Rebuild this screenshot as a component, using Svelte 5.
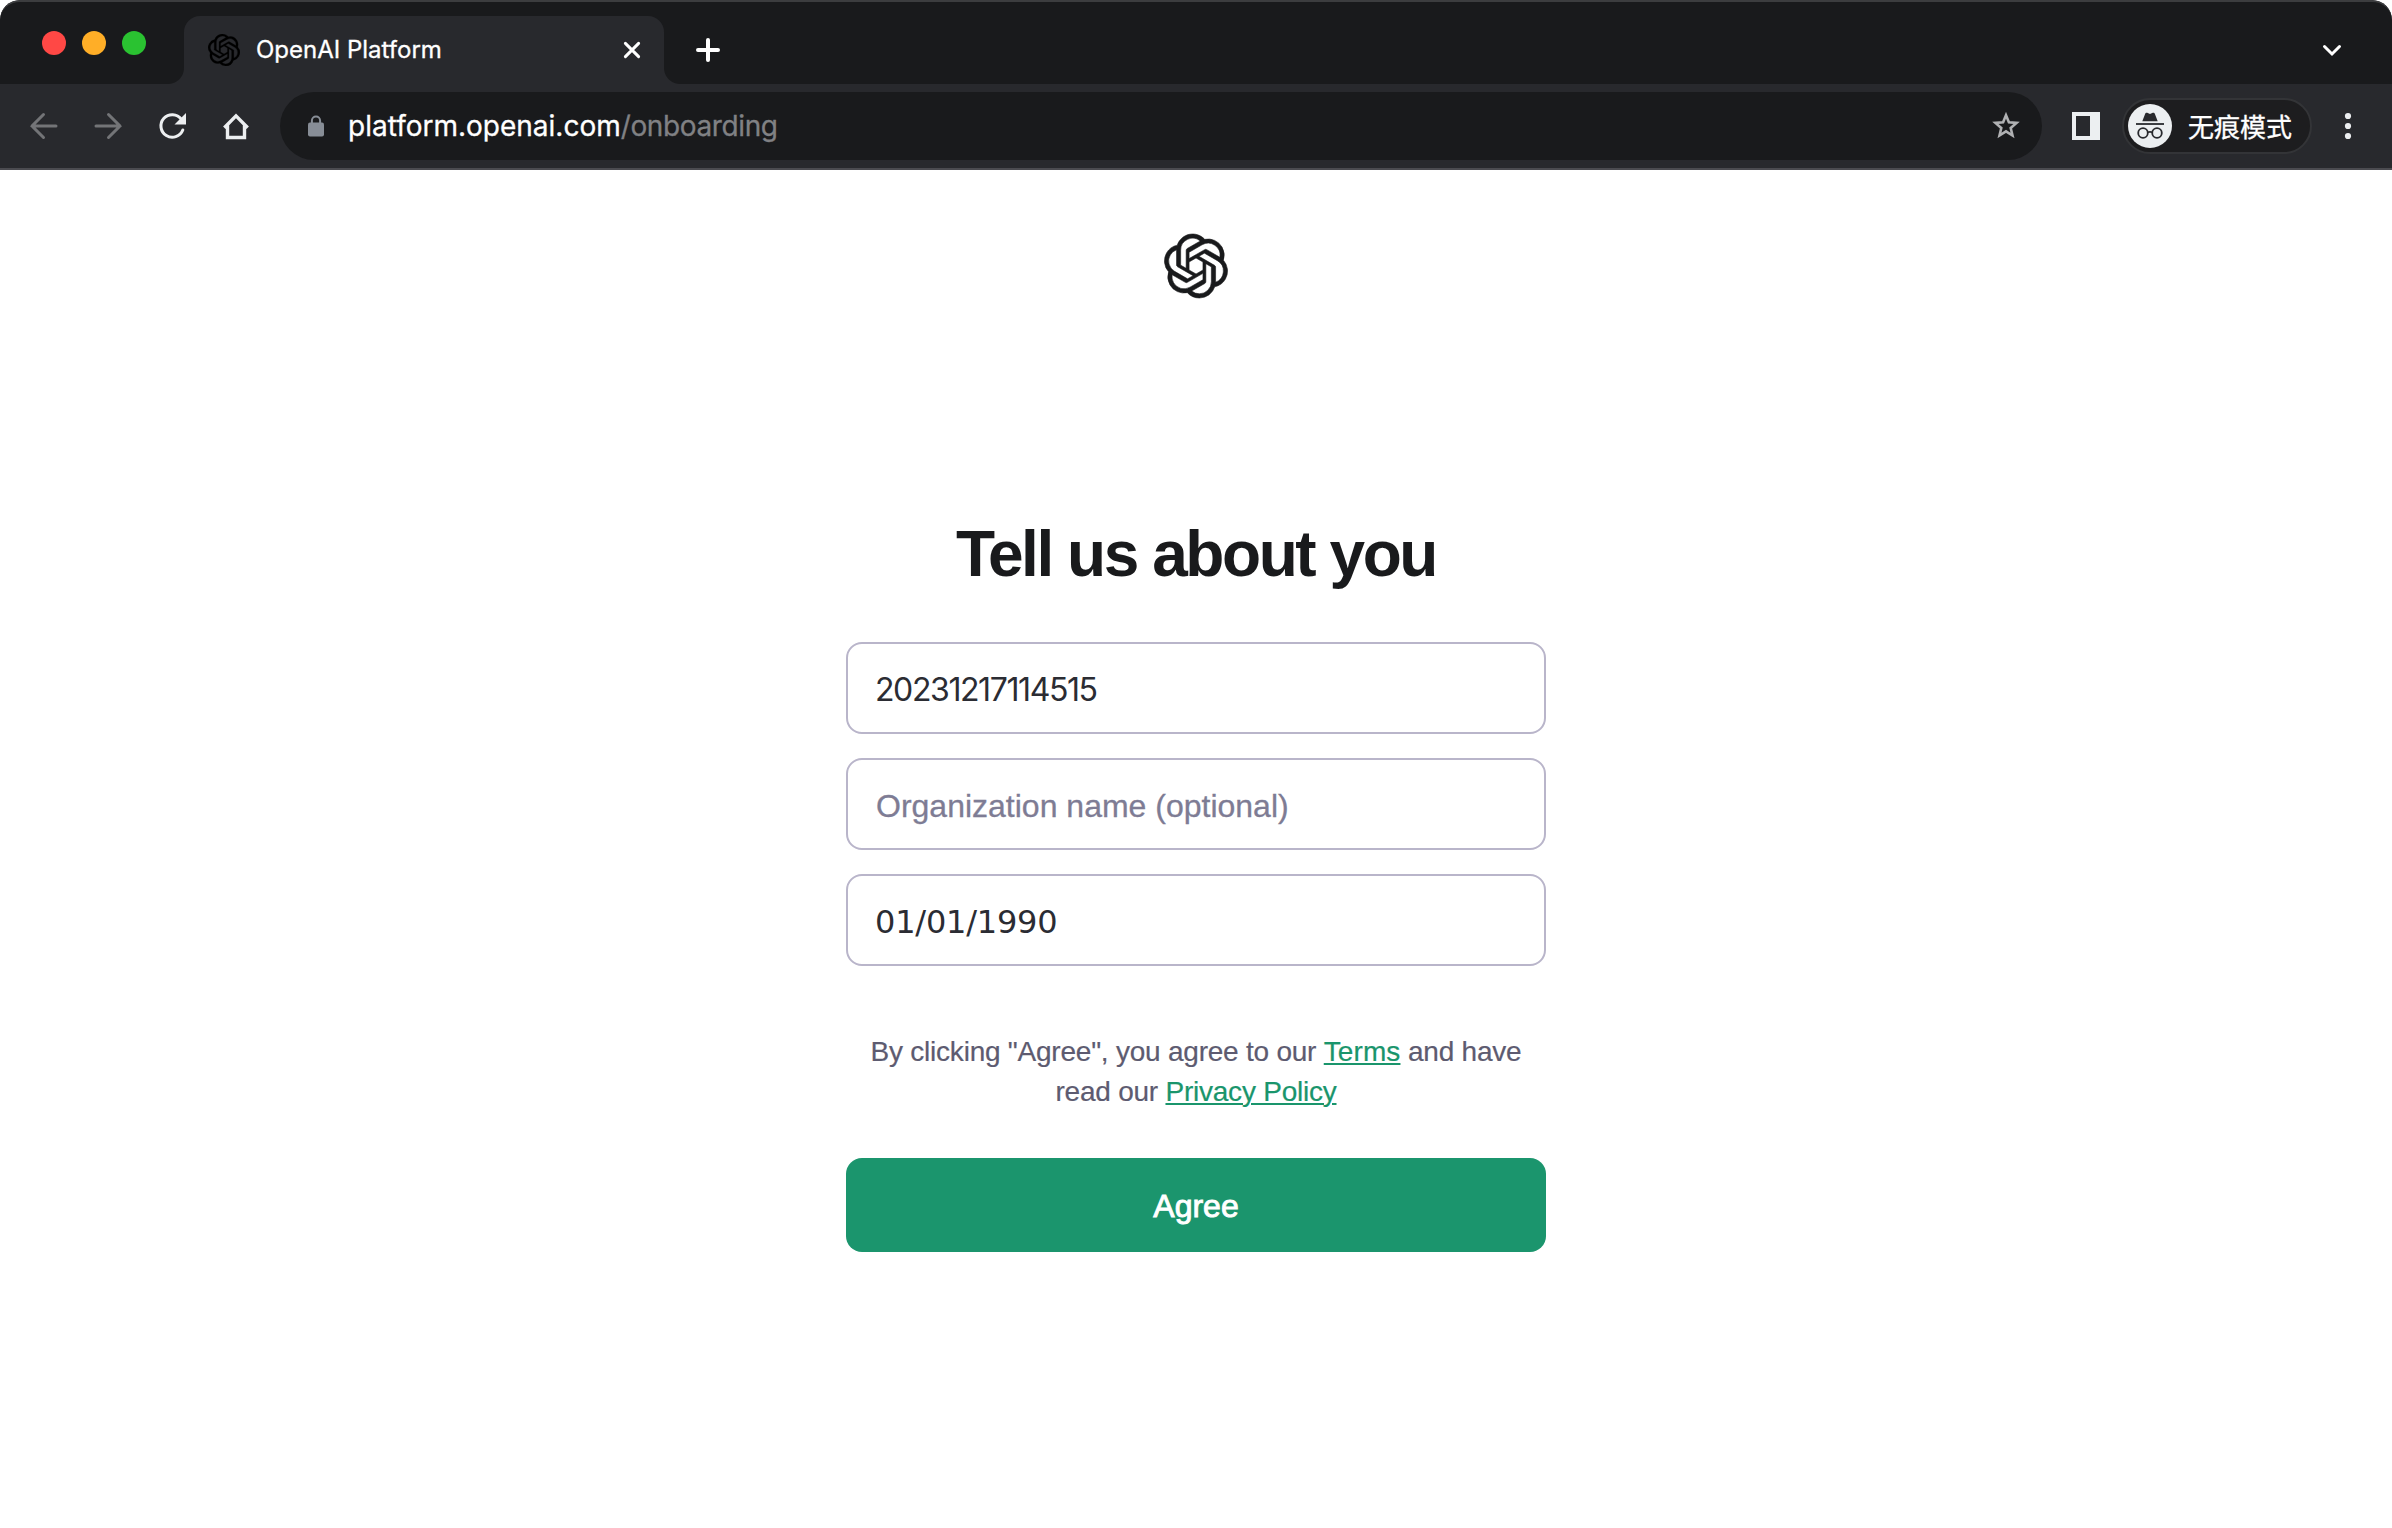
<script>
  const knot =
    'M22.2819 9.8211a5.9847 5.9847 0 0 0-.5157-4.9108 6.0462 6.0462 0 0 0-6.5098-2.9A6.0651 6.0651 0 0 0 4.9807 4.1818a5.9847 5.9847 0 0 0-3.9977 2.9 6.0462 6.0462 0 0 0 .7427 7.0966 5.98 5.98 0 0 0 .511 4.9107 6.051 6.051 0 0 0 6.5146 2.9001A5.9847 5.9847 0 0 0 13.2599 24a6.0557 6.0557 0 0 0 5.7718-4.2058 5.9894 5.9894 0 0 0 3.9977-2.9001 6.0557 6.0557 0 0 0-.7475-7.0729zm-9.022 12.6081a4.4755 4.4755 0 0 1-2.8764-1.0408l.1419-.0804 4.7783-2.7582a.7948.7948 0 0 0 .3927-.6813v-6.7369l2.02 1.1686a.071.071 0 0 1 .038.052v5.5826a4.504 4.504 0 0 1-4.4945 4.4944zm-9.6607-4.1254a4.4708 4.4708 0 0 1-.5346-3.0137l.142.0852 4.783 2.7582a.7712.7712 0 0 0 .7806 0l5.8428-3.3685v2.3324a.0804.0804 0 0 1-.0332.0615L9.74 19.9502a4.4992 4.4992 0 0 1-6.1408-1.6464zM2.3408 7.8956a4.485 4.485 0 0 1 2.3655-1.9728V11.6a.7664.7664 0 0 0 .3879.6765l5.8144 3.3543-2.0201 1.1685a.0757.0757 0 0 1-.071 0l-4.8303-2.7865A4.504 4.504 0 0 1 2.3408 7.872zm16.5963 3.8558L13.1038 8.364 15.1192 7.2a.0757.0757 0 0 1 .071 0l4.8303 2.7913a4.4944 4.4944 0 0 1-.6765 8.1042v-5.6772a.79.79 0 0 0-.407-.667zm2.0107-3.0231l-.142-.0852-4.7735-2.7818a.7759.7759 0 0 0-.7854 0L9.409 9.2297V6.8974a.0662.0662 0 0 1 .0284-.0615l4.8303-2.7866a4.4992 4.4992 0 0 1 6.6802 4.66zM8.3065 12.863l-2.02-1.1638a.0804.0804 0 0 1-.038-.0567V6.0742a4.4992 4.4992 0 0 1 7.3757-3.4537l-.142.0805L8.704 5.459a.7948.7948 0 0 0-.3927.6813zm1.0976-2.3654l2.602-1.4998 2.6069 1.4998v2.9994l-2.5974 1.4997-2.6067-1.4997Z';

  let name = $state('20231217114515');
  let organization = $state('');
  let birthday = $state('01/01/1990');
</script>

<div class="window">
  <header class="chrome">
    <div class="strip">
      <div class="lights">
        <span class="light close"></span>
        <span class="light minimize"></span>
        <span class="light zoom"></span>
      </div>
      <div class="tab">
        <svg class="favicon" viewBox="0 0 24 24"><path d={knot} /></svg>
        <span class="tab-title">OpenAI Platform</span>
        <svg class="tab-close" viewBox="0 0 20 20"><path d="M3.4 3.4 16.6 16.6M16.6 3.4 3.4 16.6" /></svg>
      </div>
      <svg class="new-tab" viewBox="0 0 24 24"><path d="M12 2v20M2 12h20" /></svg>
      <svg class="chevron" viewBox="0 0 20 20"><path d="M2.5 6.5 10 14l7.5-7.5" /></svg>
    </div>

    <div class="toolbar">
      <nav class="nav">
        <svg class="muted" viewBox="0 0 32 32"><path d="M28 16H4M15.5 4.5 4 16l11.5 11.5" /></svg>
        <svg class="muted" viewBox="0 0 32 32"><path d="M4 16h24M16.5 4.5 28 16 16.5 27.5" /></svg>
        <svg viewBox="0 0 32 32">
          <path d="M25.3 9.2A11.3 11.3 0 1 0 26.8 20" />
          <path class="solid" d="M30 3v11.5H18.5z" />
        </svg>
        <svg viewBox="0 0 32 32">
          <path class="home" d="M4.3 17.7 16 5.8 27.7 17.7M7.5 15.5V27.5h17V15.5" />
        </svg>
      </nav>

      <div class="omnibox">
        <svg class="lock" viewBox="0 0 16 22">
          <path d="M3.9 9V5.6a4.1 4.1 0 0 1 8.2 0V9" />
          <rect x="0" y="7.5" width="16" height="14" rx="2" />
        </svg>
        <span class="url">platform.openai.com<span class="path">/onboarding</span></span>
        <svg class="star" viewBox="0 0 30 30">
          <path d="M15 4.2 17.9 11.3 25.6 11.9 19.7 17 21.5 24.5 15 20.4 8.5 24.5 10.3 17 4.4 11.9 12.1 11.3z" />
        </svg>
      </div>

      <svg class="panel" viewBox="0 0 28 28"><path fill-rule="evenodd" d="M0 0h28v28H0zM4 4v20h14V4z" /></svg>

      <div class="incognito">
        <svg viewBox="0 0 44 44">
          <circle class="disc" cx="22" cy="22" r="22" />
          <path class="ink" d="M14.3 17.2 17 10.2c.5-1.3 1.6-1.6 2.8-1.1l2.2.8 2.2-.8c1.2-.5 2.3-.2 2.8 1.1l2.7 7z" />
          <path class="line" d="M8 20h28" />
          <circle class="line" cx="15" cy="29" r="4.8" />
          <circle class="line" cx="29" cy="29" r="4.8" />
          <path class="line" d="M19.8 28.3q2.2-1 4.4 0" />
        </svg>
        <span>无痕模式</span>
      </div>

      <svg class="menu" viewBox="0 0 8 28">
        <circle cx="4" cy="4" r="3.1" /><circle cx="4" cy="14" r="3.1" /><circle cx="4" cy="24" r="3.1" />
      </svg>
    </div>
  </header>

  <main>
    <svg class="logo" viewBox="0 0 24 24"><path d={knot} /></svg>
    <h1>Tell us about you</h1>
    <form onsubmit={(e) => e.preventDefault()}>
      <input class="name" bind:value={name} />
      <input bind:value={organization} placeholder="Organization name (optional)" />
      <input class="birthday" bind:value={birthday} />
      <p>
        By clicking "Agree", you agree to our <a class="terms" href="#terms">Terms</a> and have<br />
        read our <a href="#privacy">Privacy Policy</a>
      </p>
      <button type="submit">Agree</button>
    </form>
  </main>
</div>

<style>
  :global(body) {
    background: #fff;
  }
  .window {
    height: 1528px;
    overflow: hidden;
    font-family: 'Liberation Sans', Arial, sans-serif;
  }
  svg {
    display: block;
    flex: none;
  }

  /* Browser frame */
  .chrome {
    box-sizing: border-box;
    height: 170px;
    background: #28292d;
    border-bottom: 2px solid #4b4b50;
    border-radius: 20px 20px 0 0;
    overflow: hidden;
    font-family: Inter, sans-serif;
  }
  .strip {
    box-sizing: border-box;
    height: 84px;
    display: flex;
    align-items: center;
    padding: 14px 48px 0 42px;
    background: #191a1c;
    border-top: 2px solid #3c3d3f;
    border-radius: 20px 20px 0 0;
  }
  .lights {
    display: flex;
    gap: 16px;
    width: 142px;
    margin-bottom: 14px;
  }
  .light {
    width: 24px;
    height: 24px;
    border-radius: 50%;
  }
  .close {
    background: #ff4845;
  }
  .minimize {
    background: #ffae27;
  }
  .zoom {
    background: #2ac231;
  }
  .tab {
    position: relative;
    box-sizing: border-box;
    width: 480px;
    height: 68px;
    display: flex;
    align-items: center;
    padding: 0 22px 0 24px;
    background: #28292d;
    border-radius: 16px 16px 0 0;
  }
  .tab::before,
  .tab::after {
    content: '';
    position: absolute;
    bottom: 0;
    width: 16px;
    height: 16px;
  }
  .tab::before {
    right: 100%;
    background: radial-gradient(circle at 0 0, transparent 15.5px, #28292d 16.5px);
  }
  .tab::after {
    left: 100%;
    background: radial-gradient(circle at 100% 0, transparent 15.5px, #28292d 16.5px);
  }
  .favicon {
    width: 32px;
    height: 32px;
    fill: #000;
    stroke: #000;
    stroke-width: 0.2;
  }
  .tab-title {
    flex: 1;
    margin-left: 16px;
    padding-bottom: 2px;
    color: #fff;
    font-size: 24px;
    -webkit-text-stroke: 0.3px #fff;
    white-space: nowrap;
  }
  .tab-close {
    width: 20px;
    height: 20px;
    stroke: #fff;
    stroke-width: 3;
    stroke-linecap: round;
  }
  .new-tab {
    width: 24px;
    height: 24px;
    margin-left: 32px;
    stroke: #fff;
    stroke-width: 4;
    stroke-linecap: round;
  }
  .chevron {
    width: 20px;
    height: 20px;
    margin-left: auto;
    margin-right: 2px;
    fill: none;
    stroke: #fff;
    stroke-width: 3;
    stroke-linecap: round;
  }
  .toolbar {
    height: 84px;
    display: flex;
    align-items: center;
    padding: 0 40px 0 28px;
  }
  .nav {
    display: flex;
    gap: 32px;
    width: 252px;
  }
  .nav svg {
    width: 32px;
    height: 32px;
    fill: none;
    stroke: #eceef0;
    stroke-width: 3;
    stroke-linecap: round;
  }
  .nav .muted {
    stroke: #737477;
  }
  .nav .solid {
    fill: #eceef0;
    stroke: none;
  }
  .nav .home {
    stroke-width: 3.4;
    stroke-linecap: butt;
  }
  .omnibox {
    box-sizing: border-box;
    width: 1762px;
    height: 68px;
    display: flex;
    align-items: center;
    padding: 0 21px 0 28px;
    background: #191a1c;
    border-radius: 34px;
  }
  .lock {
    width: 16px;
    height: 22px;
    fill: #878d96;
  }
  .lock path {
    fill: none;
    stroke: #878d96;
    stroke-width: 2;
  }
  .url {
    flex: 1;
    margin-left: 24px;
    color: #fff;
    font-size: 28px;
    -webkit-text-stroke: 0.3px;
    white-space: nowrap;
  }
  .path {
    color: #808184;
    letter-spacing: -0.38px;
  }
  .star {
    width: 30px;
    height: 30px;
    fill: none;
    stroke: #b0b1b3;
    stroke-width: 2.6;
  }
  .panel {
    width: 28px;
    height: 28px;
    margin-left: 30px;
    fill: #eceff1;
  }
  .incognito {
    box-sizing: border-box;
    width: 190px;
    height: 56px;
    margin-left: 22px;
    padding-left: 4px;
    display: flex;
    align-items: center;
    background: #1d1d1f;
    border: 2px solid #333437;
    border-radius: 28px;
    color: #fff;
    font-family: 'Noto Sans CJK SC', sans-serif;
    font-size: 26px;
    font-weight: 400;
    line-height: 40px;
    -webkit-text-stroke: 0.3px #fff;
    white-space: nowrap;
  }
  .incognito svg {
    width: 44px;
    height: 44px;
    margin-right: 16px;
  }
  .disc {
    fill: #eceff1;
  }
  .ink {
    fill: #28292d;
  }
  .line {
    fill: none;
    stroke: #28292d;
    stroke-width: 1.8;
  }
  .menu {
    width: 8px;
    height: 28px;
    margin-left: auto;
    fill: #eceef0;
  }

  /* Onboarding form */
  main {
    display: flex;
    flex-direction: column;
    align-items: center;
    padding-top: 64px;
  }
  .logo {
    width: 64px;
    height: 64px;
    fill: #191a1c;
    stroke: #191a1c;
    stroke-width: 0.22;
    overflow: visible;
  }
  h1 {
    margin: 216px 0 0;
    color: #191a1c;
    font-size: 64px;
    font-weight: 700;
    line-height: 80px;
    letter-spacing: -2.45px;
    white-space: nowrap;
  }
  form {
    width: 700px;
    display: flex;
    flex-direction: column;
    gap: 24px;
    margin-top: 48px;
  }
  input {
    box-sizing: border-box;
    width: 100%;
    height: 92px;
    padding: 4px 28px 0;
    border: 2px solid #b9b5ca;
    border-radius: 16px;
    outline: none;
    background: #fff;
    color: #2b2c33;
    font: 32px 'Liberation Sans', Arial, sans-serif;
  }
  .name {
    padding: 3px 27px 0;
    font-family: Inter, sans-serif;
    letter-spacing: -1.4px;
  }
  .birthday {
    padding-left: 27px;
    font-family: 'DejaVu Sans', sans-serif;
    letter-spacing: -0.2px;
  }
  input::placeholder {
    color: #7e7c94;
    opacity: 1;
    -webkit-text-stroke: 0.3px #7e7c94;
  }
  p {
    margin: 42px 0 -2px;
    color: #5d5b70;
    font-size: 28px;
    line-height: 40px;
    letter-spacing: -0.23px;
    -webkit-text-stroke: 0.2px;
    text-align: center;
    white-space: nowrap;
  }
  a {
    color: #1a956c;
    text-decoration: underline;
    text-decoration-thickness: 2px;
    text-underline-offset: 2px;
  }
  .terms {
    letter-spacing: 0.1px;
  }
  button {
    height: 94px;
    margin-top: 24px;
    padding: 2px 0 0;
    border: 0;
    border-radius: 16px;
    background: #1b956d;
    color: #fff;
    font: 32px 'Liberation Sans', Arial, sans-serif;
    -webkit-text-stroke: 0.9px #fff;
  }
</style>
